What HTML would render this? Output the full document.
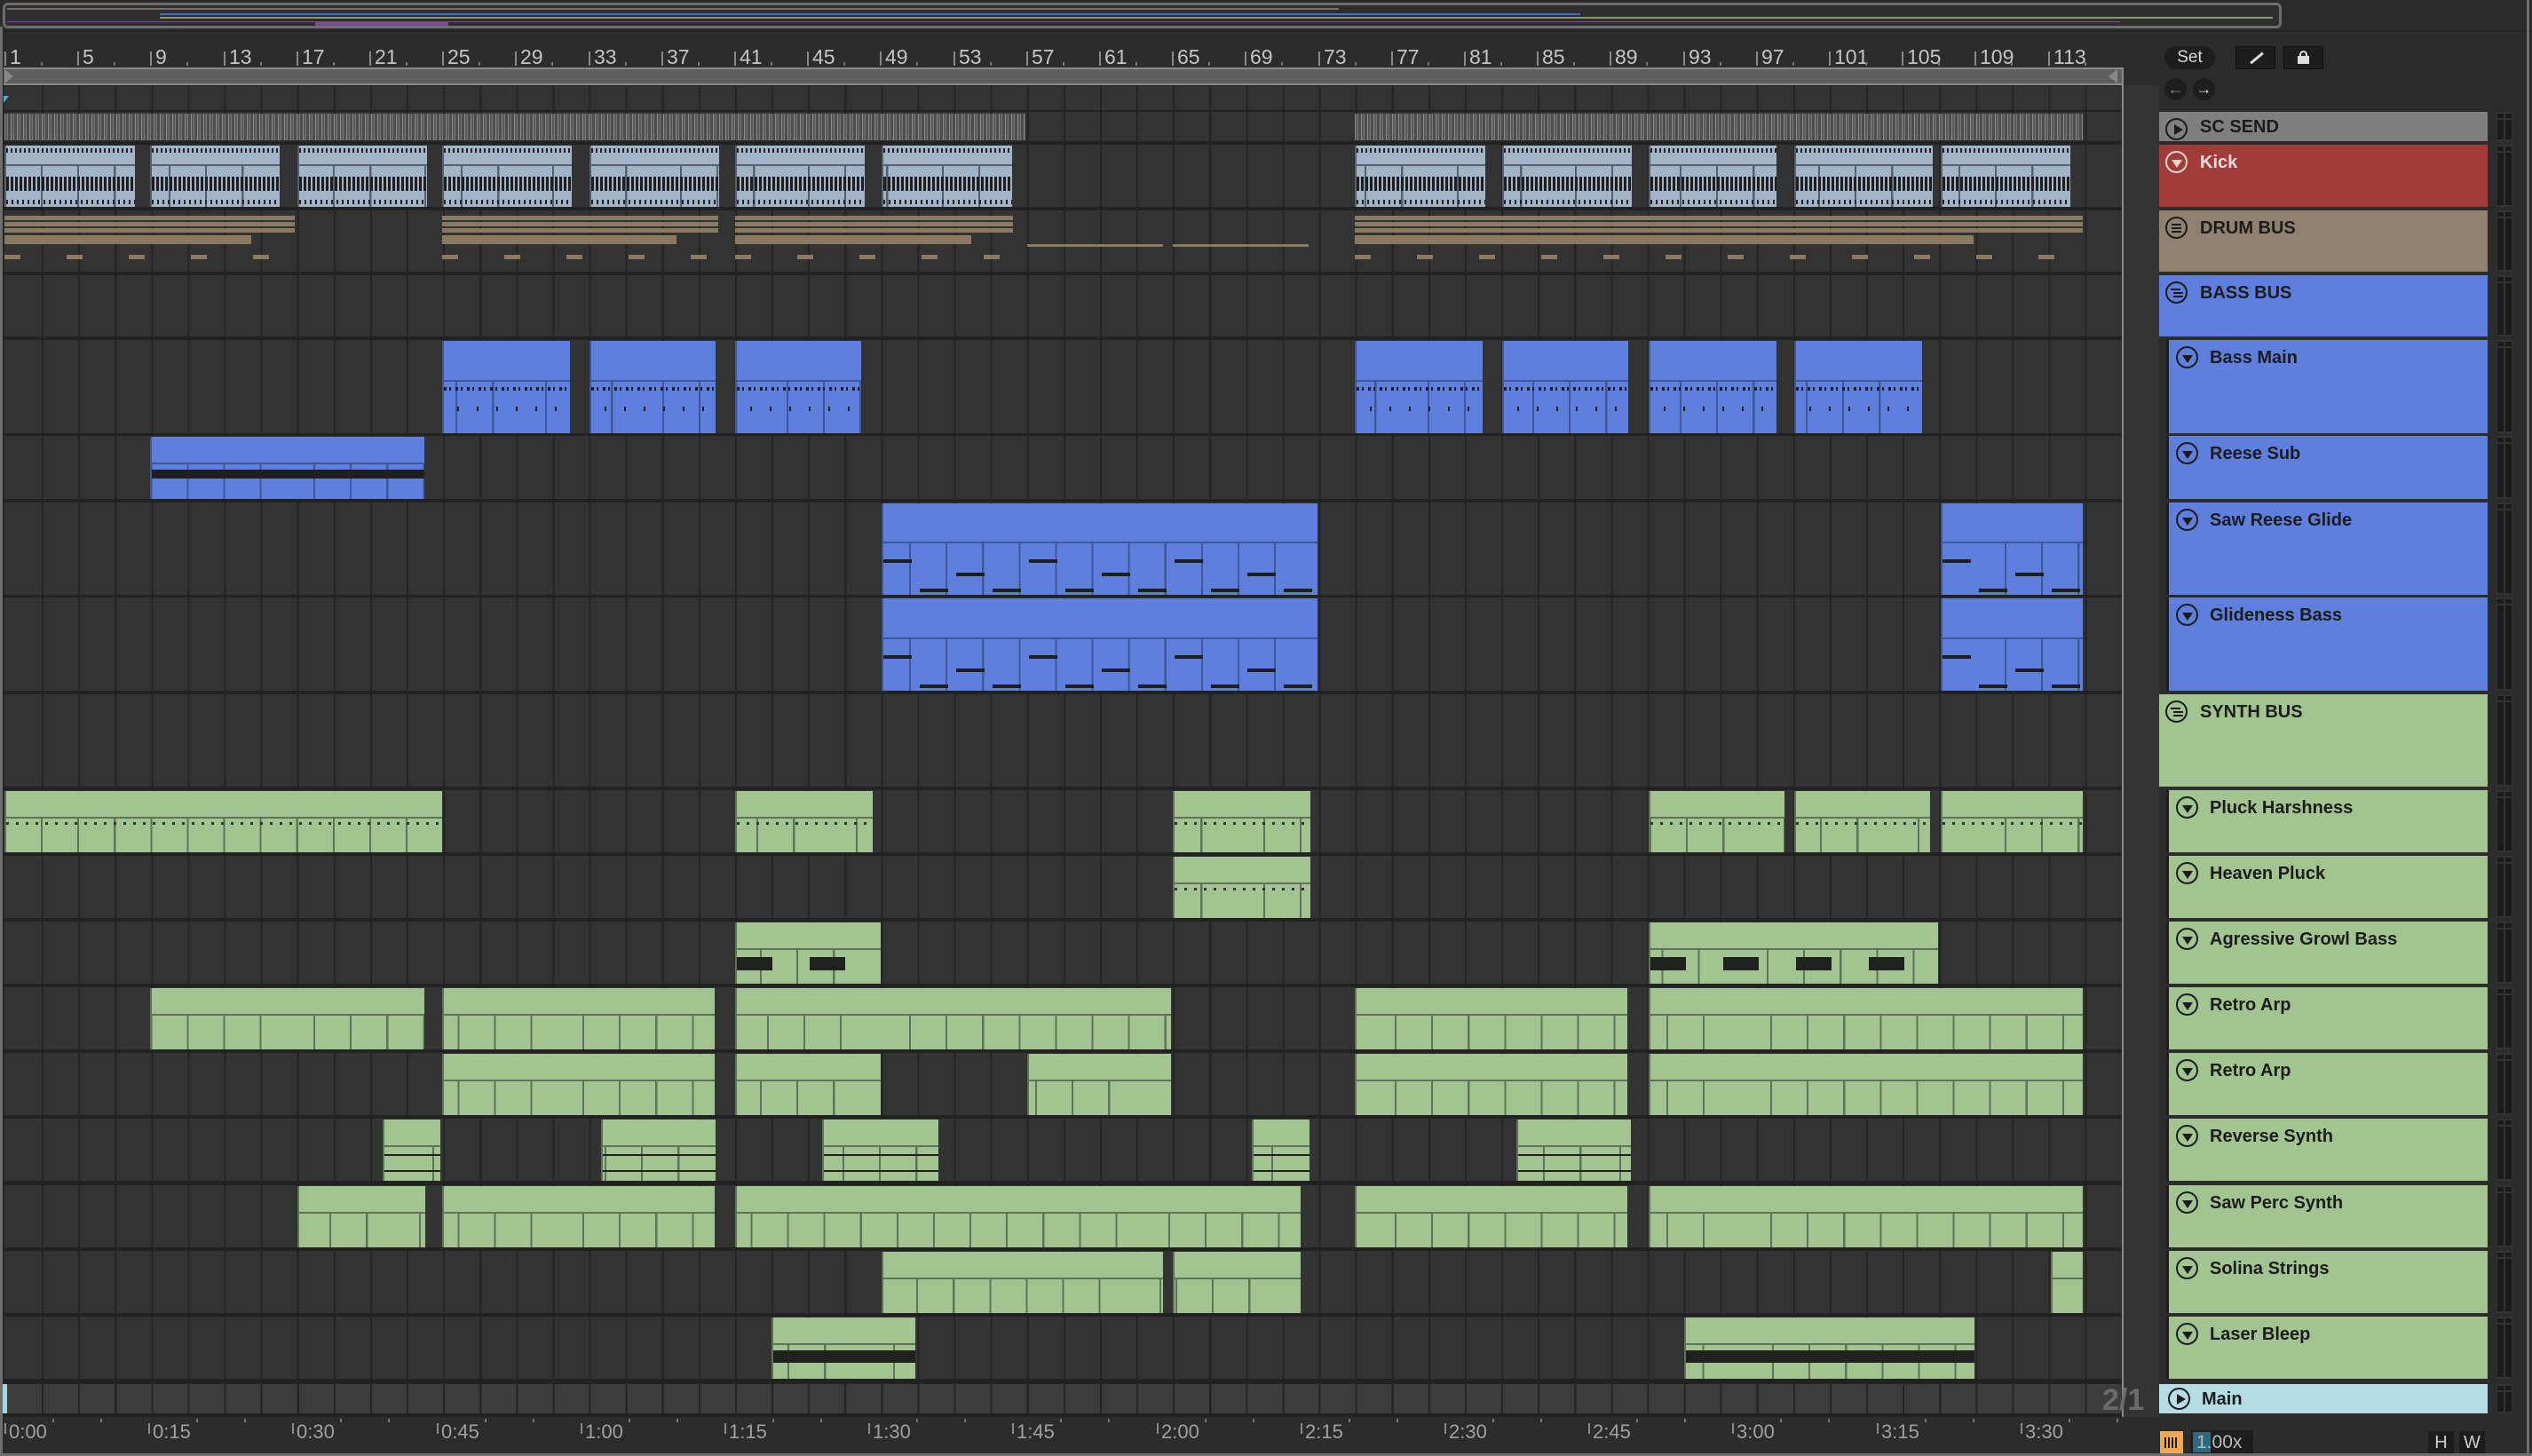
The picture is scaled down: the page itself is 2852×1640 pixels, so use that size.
<!DOCTYPE html>
<html><head><meta charset="utf-8">
<style>
*{margin:0;padding:0;box-sizing:border-box}
body{width:2852px;height:1640px;background:#2c2c2c;position:relative;overflow:hidden;font-family:"Liberation Sans",sans-serif}
.a{position:absolute}
.hd{position:absolute;left:2432px;width:370px;color:#1c1c1c;font-weight:bold;font-size:20px}
.hd.c{left:2440px;width:362px;border-left:3px solid #1e1e1e}
.hd .t{position:absolute;left:46px;top:9px;white-space:nowrap}
.hd.c .t{left:46px}
.ic{position:absolute;left:7px;top:7px;width:25px;height:25px;border:2px solid #1c1c1c;border-radius:50%}
.hd.c .ic{left:8px}
.tri{position:absolute;left:5px;top:8px;width:0;height:0;border-left:6px solid transparent;border-right:6px solid transparent;border-top:9px solid #1c1c1c}
.ply{position:absolute;left:8px;top:5px;width:0;height:0;border-top:6px solid transparent;border-bottom:6px solid transparent;border-left:10px solid #1c1c1c}
.mt{position:absolute;left:2812px;width:18px;background:#1b1b1b}
.lbl{position:absolute;color:#c4c4c4;font-size:23px}
.tl{position:absolute;color:#a0a0a0;font-size:22px}
</style></head><body>
<div class="a" style="left:3px;top:3px;width:2567px;height:29px;border:3px solid #6e6e6e;border-radius:6px;background:#2e2e2e"></div>
<div class="a" style="left:8px;top:9px;width:1500px;height:2px;background:#7c6e5d"></div>
<div class="a" style="left:180px;top:15px;width:1600px;height:2px;background:#4d6bc4"></div>
<div class="a" style="left:180px;top:19px;width:2380px;height:2px;background:#7d9b6b"></div>
<div class="a" style="left:8px;top:24px;width:2380px;height:1px;background:#7a4e8e"></div>
<div class="a" style="left:355px;top:25px;width:150px;height:4px;background:#7a4e8e"></div>
<div class="a" style="left:0;top:34px;width:2852px;height:2px;background:#232323"></div>
<div id="ruler"></div>
<div class="a" style="left:4px;top:76px;width:2386px;height:20px;background:#5e5e5e;border-top:2px solid #8a8a8a;border-bottom:2px solid #8a8a8a"></div>
<div class="a" style="left:5px;top:78px;width:0;height:0;border-top:8px solid transparent;border-bottom:8px solid transparent;border-left:10px solid #888"></div>
<div class="a" style="left:2375px;top:78px;width:0;height:0;border-top:8px solid transparent;border-bottom:8px solid transparent;border-right:10px solid #888"></div>
<div id="arr"></div>
<div class="a" style="left:2390px;top:76px;width:2px;height:1520px;background:#8a8a8a"></div>
<div class="a" style="left:4px;top:108px;width:0;height:0;border-left:6px solid #3fb6d0;border-bottom:8px solid transparent"></div>
<div class="a" style="left:2368px;top:1558px;font-size:34px;font-weight:bold;color:#6b6b6b">2/1</div>
<div class="a" style="left:2438px;top:52px;width:57px;height:26px;border-radius:13px;background:#1d1d1d;color:#d8d8d8;font-size:19px;text-align:center;line-height:26px">Set</div>
<div class="a" style="left:2518px;top:52px;width:45px;height:26px;background:#1d1d1d;border:1px solid #111"><div class="a" style="left:14px;top:11px;width:18px;height:3px;background:#ddd;transform:rotate(-40deg)"></div></div>
<div class="a" style="left:2572px;top:52px;width:45px;height:26px;background:#1d1d1d;border:1px solid #111"><div class="a" style="left:15px;top:10px;width:13px;height:9px;background:#ddd"></div><div class="a" style="left:17px;top:4px;width:9px;height:9px;border:2px solid #ddd;border-radius:5px 5px 0 0;border-bottom:none"></div></div>
<div class="a" style="left:2438px;top:88px;width:25px;height:25px;border-radius:50%;background:#1d1d1d;color:#888;font-size:18px;text-align:center;line-height:24px">&#8592;</div>
<div class="a" style="left:2470px;top:88px;width:25px;height:25px;border-radius:50%;background:#1d1d1d;color:#ddd;font-size:18px;text-align:center;line-height:24px;font-weight:bold">&#8594;</div>
<div class="hd" style="top:126px;height:33px;background:#7f7f7f"><div class="ic"><div class="ply"></div></div><div class="t" style="top:6px">SC SEND</div></div>
<div class="hd" style="top:163px;height:70px;background:#a03d3a;color:#f3dcdc"><div class="ic" style="border-color:#f0d0d0"><div class="tri" style="border-top-color:#f0d0d0"></div></div><div class="t">Kick</div></div>
<div class="hd" style="top:237px;height:69px;background:#8f816d"><div class="ic"><div class="a" style="left:5px;top:6px;width:11px;height:2px;background:#1c1c1c;box-shadow:0 4px #1c1c1c,0 8px #1c1c1c"></div></div><div class="t">DRUM BUS</div></div>
<div class="hd" style="top:310px;height:69px;background:#5f7fdc"><div class="ic"><div class="a" style="left:4px;top:6px;width:11px;height:2px;background:#1c1c1c;box-shadow:3px 4px #1c1c1c,3px 8px #1c1c1c"></div></div><div class="t">BASS BUS</div></div>
<div class="hd c" style="top:383px;height:105px;background:#5f7fdc"><div class="ic"><div class="tri"></div></div><div class="t">Bass Main</div></div>
<div class="hd c" style="top:491px;height:71px;background:#5f7fdc"><div class="ic"><div class="tri"></div></div><div class="t">Reese Sub</div></div>
<div class="hd c" style="top:566px;height:104px;background:#5f7fdc"><div class="ic"><div class="tri"></div></div><div class="t">Saw Reese Glide</div></div>
<div class="hd c" style="top:673px;height:105px;background:#5f7fdc"><div class="ic"><div class="tri"></div></div><div class="t">Glideness Bass</div></div>
<div class="hd" style="top:782px;height:104px;background:#a2c491"><div class="ic"><div class="a" style="left:4px;top:6px;width:11px;height:2px;background:#1c1c1c;box-shadow:3px 4px #1c1c1c,3px 8px #1c1c1c"></div></div><div class="t">SYNTH BUS</div></div>
<div class="hd c" style="top:890px;height:70px;background:#a2c491"><div class="ic"><div class="tri"></div></div><div class="t">Pluck Harshness</div></div>
<div class="hd c" style="top:964px;height:70px;background:#a2c491"><div class="ic"><div class="tri"></div></div><div class="t">Heaven Pluck</div></div>
<div class="hd c" style="top:1038px;height:70px;background:#a2c491"><div class="ic"><div class="tri"></div></div><div class="t">Agressive Growl Bass</div></div>
<div class="hd c" style="top:1112px;height:70px;background:#a2c491"><div class="ic"><div class="tri"></div></div><div class="t">Retro Arp</div></div>
<div class="hd c" style="top:1186px;height:70px;background:#a2c491"><div class="ic"><div class="tri"></div></div><div class="t">Retro Arp</div></div>
<div class="hd c" style="top:1260px;height:70px;background:#a2c491"><div class="ic"><div class="tri"></div></div><div class="t">Reverse Synth</div></div>
<div class="hd c" style="top:1335px;height:70px;background:#a2c491"><div class="ic"><div class="tri"></div></div><div class="t">Saw Perc Synth</div></div>
<div class="hd c" style="top:1409px;height:70px;background:#a2c491"><div class="ic"><div class="tri"></div></div><div class="t">Solina Strings</div></div>
<div class="hd c" style="top:1483px;height:70px;background:#a2c491"><div class="ic"><div class="tri"></div></div><div class="t">Laser Bleep</div></div>
<div class="hd" style="top:1559px;height:33px;background:#b6dce7"><div class="ic" style="left:10px;top:4px"><div class="ply"></div></div><div class="t" style="top:6px;left:48px">Main</div></div>
<div id="meters"></div>
<div id="time"></div>
<div class="a" style="left:2432px;top:1611px;width:28px;height:27px;background:#f0a854;border:1px solid #222"><div class="a" style="left:5px;top:7px;width:16px;height:12px;background:repeating-linear-gradient(90deg,#1c1c1c 0 2px,transparent 2px 4px)"></div></div>
<div class="a" style="left:2468px;top:1611px;width:70px;height:27px;background:#1d1d1d;color:#bbb;font-size:21px;line-height:27px;padding-left:6px"><div class="a" style="left:2px;top:2px;width:20px;height:23px;background:#2d6a80"></div><span style="position:relative">1.00x</span></div>
<div class="a" style="left:2735px;top:1612px;width:29px;height:26px;background:#1d1d1d;color:#ccc;font-size:20px;text-align:center;line-height:26px">H</div>
<div class="a" style="left:2770px;top:1612px;width:29px;height:26px;background:#1d1d1d;color:#ccc;font-size:20px;text-align:center;line-height:26px">W</div>
<div class="a" style="left:2846px;top:0;width:3px;height:1640px;background:#6e6e6e"></div>
<div class="a" style="left:0;top:1637px;width:2852px;height:3px;background:#6e6e6e"></div>
<div class="a" style="left:0;top:30px;width:3px;height:1610px;background:#6e6e6e"></div>
<script>
var S=1.819;
var rows=[[97,124],[126,159],[163,233],[237,306],[310,379],[383,488],[491,562],[566,670],[673,778],[782,886],[890,960],[964,1034],[1038,1108],[1112,1182],[1186,1256],[1260,1330],[1335,1405],[1409,1479],[1483,1553],[1559,1592]];
var h='';
h+='<div class="a" style="left:3px;top:96px;width:2387px;height:1500px;background:#222"></div>';
rows.forEach(function(r,i){
 var bg=i==rows.length-1?'#3c3c3c':'#333';
 h+='<div class="a" style="left:3px;top:'+r[0]+'px;width:2387px;height:'+(r[1]-r[0])+'px;background:'+bg+';background-image:repeating-linear-gradient(90deg,transparent 0 39px,#252525 39px 41.1px);background-position:5px 0"></div>';
});
h+='<div class="a" style="left:2392px;top:96px;width:40px;height:1500px;background:#333"></div>';
function clip(x1,x2,r,col,dark,kind){
 var L=Math.round(x1*S),W=Math.round((x2-x1)*S),T=r[0]+1,H=r[1]-r[0]-1;
 var hh=Math.round(H*0.42);
 if(kind=='kick')hh=Math.round(H*0.3);
 var s='<div class="a" style="left:'+L+'px;top:'+T+'px;width:'+W+'px;height:'+H+'px;background:'+col+';border-left:2px solid '+dark+';overflow:hidden">';
 s+='<div class="a" style="left:0;top:'+hh+'px;width:100%;height:2px;background:'+dark+'"></div>';
 s+='<div class="a" style="left:0;top:'+(hh+2)+'px;width:100%;height:'+(H-hh-2)+'px;background:repeating-linear-gradient(90deg,transparent 0 39px,'+dark+' 39px 41.1px);background-position:'+(5-L)+'px 0"></div>';
 if(kind=='kick'){
  s+='<div class="a" style="left:0;top:3px;width:100%;height:5px;background:repeating-linear-gradient(90deg,#222 0 2px,transparent 2px 5px)"></div>';
  s+='<div class="a" style="left:0;top:'+(hh+14)+'px;width:100%;height:16px;background:repeating-linear-gradient(90deg,#1f1f1f 0 3px,transparent 3px 5px)"></div>';
  s+='<div class="a" style="left:0;top:'+(H-8)+'px;width:100%;height:5px;background:repeating-linear-gradient(90deg,#222 0 2px,transparent 2px 6px)"></div>';
 }else if(kind=='bm'){
  s+='<div class="a" style="left:0;top:'+(hh+8)+'px;width:100%;height:4px;background:repeating-linear-gradient(90deg,#1f1f1f 0 3px,transparent 3px 6px,#1f1f1f 6px 8px,transparent 8px 13px)"></div>';
  s+='<div class="a" style="left:15px;top:'+(hh+30)+'px;width:80%;height:5px;background:repeating-linear-gradient(90deg,#1f1f1f 0 2px,transparent 2px 22px)"></div>';
 }else if(kind=='rs'){
  s+='<div class="a" style="left:0;top:'+(hh+8)+'px;width:100%;height:10px;background:#1f1f1f"></div>';
 }else if(kind=='glide'){
  for(var x=0,k=0;x<W;x+=41,k++){var y=hh+Math.round((H-hh)*([0.4,0.95,0.65,0.95,0.4,0.95,0.65,0.95][k%8]));s+='<div class="a" style="left:'+x+'px;top:'+(y-4)+'px;width:32px;height:4px;background:#1f1f1f"></div>';}
 }else if(kind=='ag'){
  for(var x=0;x<W-20;x+=82)s+='<div class="a" style="left:'+x+'px;top:'+(hh+10)+'px;width:40px;height:15px;background:#1f221f"></div>';
 }else if(kind=='rev'){
  s+='<div class="a" style="left:0;top:'+(hh+10)+'px;width:100%;height:2px;background:#1f1f1f"></div><div class="a" style="left:0;top:'+(hh+28)+'px;width:100%;height:2px;background:#1f1f1f"></div>';
 }else if(kind=='laser'){
  s+='<div class="a" style="left:0;top:'+(hh+8)+'px;width:100%;height:14px;background:#1f221f"></div>';
 }else if(kind=='pl'){
  s+='<div class="a" style="left:0;top:'+(hh+6)+'px;width:100%;height:3px;background:repeating-linear-gradient(90deg,#333 0 3px,transparent 3px 11px)"></div>';
 }
 return s+'</div>';
}
var B='#5f7fdc',BD='#3f5799',G='#a2c491',GD='#5f7356',K='#a2b4c7',KD='#56636f';
[[3,635],[839,1290]].forEach(function(c){h+='<div class="a" style="left:'+Math.round(c[0]*S)+'px;top:128px;width:'+Math.round((c[1]-c[0])*S)+'px;height:30px;background:#5a5a5a;background-image:repeating-linear-gradient(90deg,#8a8a8a 0 1px,#5a5a5a 1px 3px,#777 3px 4px,#4e4e4e 4px 7px)"></div>';});
[[3,84],[93,173],[184,264],[274,354],[365,445],[455,535],[546,627],[839,920],[930,1010],[1021,1100],[1111,1197],[1202,1282]].forEach(function(c){h+=clip(c[0],c[1],rows[2],K,KD,'kick');});
[[3,183],[274,445],[455,627],[839,1290]].forEach(function(c){var L=Math.round(c[0]*S),W=Math.round((c[1]-c[0])*S);
 [243,250,257,265,270].forEach(function(y,i){h+='<div class="a" style="left:'+L+'px;top:'+y+'px;width:'+(i>2?W*0.85:W)+'px;height:5px;background:#8a7a62"></div>';});
 h+='<div class="a" style="left:'+L+'px;top:287px;width:'+W+'px;height:5px;background:repeating-linear-gradient(90deg,#8a7a62 0 18px,transparent 18px 70px)"></div>';});
[[636,720],[726,810]].forEach(function(c){h+='<div class="a" style="left:'+Math.round(c[0]*S)+'px;top:275px;width:'+Math.round((c[1]-c[0])*S)+'px;height:3px;background:#8a7a62"></div>';});
[[274,353],[365,443],[455,533],[839,918],[930,1008],[1021,1100],[1111,1190]].forEach(function(c){h+=clip(c[0],c[1],rows[5],B,BD,'bm');});
h+=clip(93,263,rows[6],B,BD,'rs');
[[546,816],[1202,1290]].forEach(function(c){h+=clip(c[0],c[1],rows[7],B,BD,'glide');h+=clip(c[0],c[1],rows[8],B,BD,'glide');});
[[3,274],[455,540],[726,811],[1021,1105],[1111,1195],[1202,1290]].forEach(function(c){h+=clip(c[0],c[1],rows[10],G,GD,'pl');});
h+=clip(726,811,rows[11],G,GD,'pl');
[[455,545],[1021,1200]].forEach(function(c){h+=clip(c[0],c[1],rows[12],G,GD,'ag');});
[[93,263],[274,443],[455,725],[839,1008],[1021,1290]].forEach(function(c){h+=clip(c[0],c[1],rows[13],G,GD,'');});
[[274,443],[455,545],[636,725],[839,1008],[1021,1290]].forEach(function(c){h+=clip(c[0],c[1],rows[14],G,GD,'');});
[[237,273],[372,443],[509,581],[775,811],[939,1010]].forEach(function(c){h+=clip(c[0],c[1],rows[15],G,GD,'rev');});
[[184,263],[274,443],[455,805],[839,1008],[1021,1290]].forEach(function(c){h+=clip(c[0],c[1],rows[16],G,GD,'');});
[[546,720],[726,805],[1270,1290]].forEach(function(c){h+=clip(c[0],c[1],rows[17],G,GD,'');});
[[478,567],[1043,1223]].forEach(function(c){h+=clip(c[0],c[1],rows[18],G,GD,'laser');});
h+='<div class="a" style="left:3px;top:1559px;width:5px;height:33px;background:#9fd6e4"></div>';
document.getElementById('arr').innerHTML=h;
var r='';
for(var n=1;n<=113;n+=4){var x=Math.round(5+(n-1)*20.55);r+='<div class="a" style="left:'+x+'px;top:58px;width:2px;height:16px;background:#888"></div><div class="lbl" style="left:'+(x+6)+'px;top:51px">'+n+'</div><div class="a" style="left:'+(x+41)+'px;top:70px;width:2px;height:4px;background:#777"></div>';}
document.getElementById('ruler').innerHTML=r;
var t='',lab=['0:00','0:15','0:30','0:45','1:00','1:15','1:30','1:45','2:00','2:15','2:30','2:45','3:00','3:15','3:30'];
lab.forEach(function(l,i){var x=Math.round(5+i*162.2);t+='<div class="a" style="left:'+x+'px;top:1603px;width:2px;height:12px;background:#888"></div><div class="tl" style="left:'+(x+5)+'px;top:1600px">'+l+'</div>';
 for(var k=1;k<3;k++)t+='<div class="a" style="left:'+Math.round(x+k*54)+'px;top:1598px;width:2px;height:4px;background:#777"></div>';});
document.getElementById('time').innerHTML=t;
var m='';
rows.slice(1).forEach(function(r){m+='<div class="mt" style="top:'+r[0]+'px;height:'+(r[1]-r[0])+'px;background:#333"><div class="a" style="left:1px;top:2px;width:7px;height:'+(r[1]-r[0]-4)+'px;background:#1b1b1b"></div><div class="a" style="left:10px;top:2px;width:7px;height:'+(r[1]-r[0]-4)+'px;background:#1b1b1b"></div><div class="a" style="left:0;top:7px;width:18px;height:2px;background:#333"></div></div>';});
document.getElementById('meters').innerHTML=m;
</script>
</body></html>
